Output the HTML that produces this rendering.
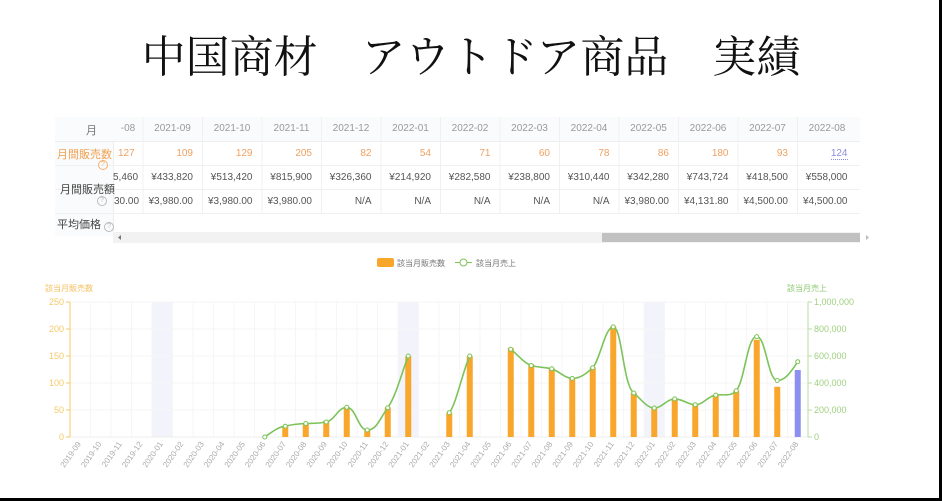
<!DOCTYPE html>
<html><head><meta charset="utf-8"><style>
html,body{margin:0;padding:0;background:#fff;}
body{width:942px;height:501px;position:relative;overflow:hidden;font-family:"Liberation Sans","Noto Sans CJK JP",sans-serif;}
.title{position:absolute;left:0;width:942px;top:30px;text-align:center;font-family:"Liberation Serif","Noto Serif CJK SC",serif;font-size:44px;line-height:56px;color:#111;letter-spacing:0;}
.c{position:absolute;font-size:10px;color:#555;white-space:nowrap;}
.hd{color:#999;text-align:center;width:59px;}
.num{text-align:right;width:50px;}
.q{display:inline-block;width:8px;height:8px;border:1px solid #bbb;border-radius:50%;font-size:7px;line-height:8px;text-align:center;color:#bbb;}
</style></head><body>
<div class="title">中国商材　アウトドア商品　実績</div>

<div style="position:absolute;left:55px;top:117px;width:805px;height:119px;background:#fff;"></div>
<div style="position:absolute;left:55px;top:117px;width:58px;height:119px;background:#fafbfc;border-right:1px solid #eee;"></div>
<div style="position:absolute;left:55px;top:117px;width:805px;height:24px;background:#fafbfc;border-bottom:1px solid #eee;"></div>
<div style="position:absolute;left:55px;top:165px;width:805px;border-top:1px solid #f0f0f0;"></div>
<div style="position:absolute;left:55px;top:189px;width:805px;border-top:1px solid #f0f0f0;"></div>
<div style="position:absolute;left:55px;top:213px;width:805px;border-top:1px solid #f0f0f0;"></div>
<svg style="position:absolute;left:0;top:0" width="942" height="250">
<g stroke="#f0f0f0" stroke-width="1">
<line x1="143" y1="117" x2="143" y2="213"/><line x1="202.5" y1="117" x2="202.5" y2="213"/><line x1="262" y1="117" x2="262" y2="213"/><line x1="321.5" y1="117" x2="321.5" y2="213"/><line x1="381" y1="117" x2="381" y2="213"/><line x1="440.5" y1="117" x2="440.5" y2="213"/><line x1="500" y1="117" x2="500" y2="213"/><line x1="559.5" y1="117" x2="559.5" y2="213"/><line x1="619" y1="117" x2="619" y2="213"/><line x1="678.5" y1="117" x2="678.5" y2="213"/><line x1="738" y1="117" x2="738" y2="213"/><line x1="797.5" y1="117" x2="797.5" y2="213"/>
</g>
<rect x="113" y="232" width="747" height="11" fill="#f2f2f2"/>
<rect x="602" y="233" width="258" height="9" fill="#c1c1c1"/>
<path d="M118 237.5 L121 235 L121 240Z" fill="#777"/>
<path d="M866 235 L869 237.5 L866 240Z" fill="#bbb"/>
</svg>
<div class="c" style="left:86px;top:122px;color:#777;font-size:11px">月</div>
<div class="c" style="left:57px;top:146px;color:#f0a050;font-size:11px">月間販売数</div>
<div class="c" style="left:98px;top:158px"><span class="q" style="border-color:#f5b070;color:#f5b070">?</span></div>
<div class="c" style="left:60px;top:181px;color:#444;font-size:11px">月間販売額</div>
<div class="c" style="left:97px;top:194px"><span class="q">?</span></div>
<div class="c" style="left:57px;top:216px;color:#444;font-size:11px">平均価格 <span class="q">?</span></div>

<div class="c hd" style="left:113px;width:30px;top:123px">-08</div>
<div class="c hd" style="left:143px;top:123px">2021-09</div>
<div class="c hd" style="left:202.5px;top:123px">2021-10</div>
<div class="c hd" style="left:262px;top:123px">2021-11</div>
<div class="c hd" style="left:321.5px;top:123px">2021-12</div>
<div class="c hd" style="left:381px;top:123px">2022-01</div>
<div class="c hd" style="left:440.5px;top:123px">2022-02</div>
<div class="c hd" style="left:500px;top:123px">2022-03</div>
<div class="c hd" style="left:559.5px;top:123px">2022-04</div>
<div class="c hd" style="left:619px;top:123px">2022-05</div>
<div class="c hd" style="left:678.5px;top:123px">2022-06</div>
<div class="c hd" style="left:738px;top:123px">2022-07</div>
<div class="c hd" style="left:797.5px;top:123px">2022-08</div>

<div class="c" style="left:118px;top:148px;color:#f0a060">127</div>
<div class="c num" style="left:143px;top:148px;color:#f0a060">109</div>
<div class="c num" style="left:202.5px;top:148px;color:#f0a060">129</div>
<div class="c num" style="left:262px;top:148px;color:#f0a060">205</div>
<div class="c num" style="left:321.5px;top:148px;color:#f0a060">82</div>
<div class="c num" style="left:381px;top:148px;color:#f0a060">54</div>
<div class="c num" style="left:440.5px;top:148px;color:#f0a060">71</div>
<div class="c num" style="left:500px;top:148px;color:#f0a060">60</div>
<div class="c num" style="left:559.5px;top:148px;color:#f0a060">78</div>
<div class="c num" style="left:619px;top:148px;color:#f0a060">86</div>
<div class="c num" style="left:678.5px;top:148px;color:#f0a060">180</div>
<div class="c num" style="left:738px;top:148px;color:#f0a060">93</div>
<div class="c num" style="left:797.5px;top:148px;color:#8a8de0;"><span style="border-bottom:1px dotted #8a8de0">124</span></div>

<div class="c" style="left:113px;top:172px">5,460</div>
<div class="c num" style="left:143px;top:172px">¥433,820</div>
<div class="c num" style="left:202.5px;top:172px">¥513,420</div>
<div class="c num" style="left:262px;top:172px">¥815,900</div>
<div class="c num" style="left:321.5px;top:172px">¥326,360</div>
<div class="c num" style="left:381px;top:172px">¥214,920</div>
<div class="c num" style="left:440.5px;top:172px">¥282,580</div>
<div class="c num" style="left:500px;top:172px">¥238,800</div>
<div class="c num" style="left:559.5px;top:172px">¥310,440</div>
<div class="c num" style="left:619px;top:172px">¥342,280</div>
<div class="c num" style="left:678.5px;top:172px">¥743,724</div>
<div class="c num" style="left:738px;top:172px">¥418,500</div>
<div class="c num" style="left:797.5px;top:172px">¥558,000</div>

<div class="c" style="left:114px;top:196px">30.00</div>
<div class="c num" style="left:143px;top:196px">¥3,980.00</div>
<div class="c num" style="left:202.5px;top:196px">¥3,980.00</div>
<div class="c num" style="left:262px;top:196px">¥3,980.00</div>
<div class="c num" style="left:321.5px;top:196px">N/A</div>
<div class="c num" style="left:381px;top:196px">N/A</div>
<div class="c num" style="left:440.5px;top:196px">N/A</div>
<div class="c num" style="left:500px;top:196px">N/A</div>
<div class="c num" style="left:559.5px;top:196px">N/A</div>
<div class="c num" style="left:619px;top:196px">¥3,980.00</div>
<div class="c num" style="left:678.5px;top:196px">¥4,131.80</div>
<div class="c num" style="left:738px;top:196px">¥4,500.00</div>
<div class="c num" style="left:797.5px;top:196px">¥4,500.00</div>

<svg style="position:absolute;left:0;top:250px" width="942" height="251" viewBox="0 250 942 251" font-family="Liberation Sans, Noto Sans CJK JP, sans-serif">
<rect x="377" y="258" width="17" height="9" rx="2" fill="#f8a62c"/>
<text x="397" y="266" font-size="8" fill="#777">該当月販売数</text>
<line x1="455" y1="262.5" x2="472" y2="262.5" stroke="#7cc35a" stroke-width="1"/>
<circle cx="463.5" cy="262.5" r="3.5" fill="#fff" stroke="#7cc35a"/>
<text x="476" y="266" font-size="8" fill="#777">該当月売上</text>
<text x="45" y="291" font-size="8" fill="#f5c060">該当月販売数</text>
<text x="787" y="291" font-size="8" fill="#8cc870">該当月売上</text>
<rect x="152" y="302" width="20.5" height="135" fill="#f3f4fb"/>
<rect x="398" y="302" width="20.5" height="135" fill="#f3f4fb"/>
<rect x="644" y="302" width="20.5" height="135" fill="#f3f4fb"/>
<g stroke="#f6f6f6" stroke-width="1">
<line x1="70" y1="302" x2="808" y2="302"/><line x1="70" y1="329" x2="808" y2="329"/><line x1="70" y1="356" x2="808" y2="356"/><line x1="70" y1="383" x2="808" y2="383"/><line x1="70" y1="410" x2="808" y2="410"/>
<path d="M90.5 302V437M111 302V437M131.5 302V437M152 302V437M172.5 302V437M193 302V437M213.5 302V437M234 302V437M254.5 302V437M275 302V437M295.5 302V437M316 302V437M336.5 302V437M357 302V437M377.5 302V437M398 302V437M418.5 302V437M439 302V437M459.5 302V437M480 302V437M500.5 302V437M521 302V437M541.5 302V437M562 302V437M582.5 302V437M603 302V437M623.5 302V437M644 302V437M664.5 302V437M685 302V437M705.5 302V437M726 302V437M746.5 302V437M767 302V437M787.5 302V437"/>
</g>
<line x1="70" y1="437" x2="808" y2="437" stroke="#eee"/>
<line x1="70" y1="302" x2="70" y2="437" stroke="#f5c96a"/>
<line x1="808" y1="302" x2="808" y2="437" stroke="#b8dca0"/>
<g stroke="#f5c96a"><path d="M66 302H70M66 329H70M66 356H70M66 383H70M66 410H70M66 437H70"/></g>
<g stroke="#b8dca0"><path d="M808 302H812M808 329H812M808 356H812M808 383H812M808 410H812M808 437H812"/></g>
<g font-size="9" fill="#f5c96a" text-anchor="end">
<text x="64" y="305">250</text><text x="64" y="332">200</text><text x="64" y="359">150</text><text x="64" y="386">100</text><text x="64" y="413">50</text><text x="64" y="440">0</text>
</g>
<g font-size="9" fill="#9fd080">
<text x="814" y="305">1,000,000</text><text x="814" y="332">800,000</text><text x="814" y="359">600,000</text><text x="814" y="386">400,000</text><text x="814" y="413">200,000</text><text x="814" y="440">0</text>
</g>
<g fill="#f8a62c">
<rect x="282.25" y="426.2" width="6" height="10.8"/>
<rect x="302.75" y="423.5" width="6" height="13.5"/>
<rect x="323.25" y="420.8" width="6" height="16.2"/>
<rect x="343.75" y="407.3" width="6" height="29.7"/>
<rect x="364.25" y="430" width="6" height="7"/>
<rect x="384.75" y="407.3" width="6" height="29.7"/>
<rect x="405.25" y="356" width="6" height="81"/>
<rect x="446.25" y="412.7" width="6" height="24.3"/>
<rect x="466.75" y="356" width="6" height="81"/>
<rect x="507.75" y="347.9" width="6" height="89.1"/>
<rect x="528.25" y="364.1" width="6" height="72.9"/>
<rect x="548.75" y="368.4" width="6" height="68.6"/>
<rect x="569.25" y="378.1" width="6" height="58.9"/>
<rect x="589.75" y="367.3" width="6" height="69.7"/>
<rect x="610.25" y="326.3" width="6" height="110.7"/>
<rect x="630.75" y="392.7" width="6" height="44.3"/>
<rect x="651.25" y="407.8" width="6" height="29.2"/>
<rect x="671.75" y="398.7" width="6" height="38.3"/>
<rect x="692.25" y="404.6" width="6" height="32.4"/>
<rect x="712.75" y="394.9" width="6" height="42.1"/>
<rect x="733.25" y="390.6" width="6" height="46.4"/>
<rect x="753.75" y="339.8" width="6" height="97.2"/>
<rect x="774.25" y="386.8" width="6" height="50.2"/>
</g>
<rect x="794.75" y="370" width="6" height="67" fill="#8c8ff0"/>
<g fill="none" stroke="#7cc35a" stroke-width="1.6" stroke-linejoin="round">
<path d="M264.75 437 C272 432,278 427,285.25 426.2 C292 424.5,298 423.8,305.75 423.5 C313 423.3,319 423.5,326.25 422 C335 420,338 407.3,346.75 407.3 C356 407.3,358 430,367.25 430 C377 430,380 418,387.75 407.8 C396 396,402 372,408.25 356"/>
<path d="M449.25 412.7 C456 405,463 370,469.75 356"/>
<path d="M510.75 349.3 C518 355,524 363,531.25 365.5 C538 367.5,545 367,551.75 368.8 C559 371,565 378.4,572.25 378.4 C580 378.4,586 374,592.75 367.7 C600 360,605 326.9,613.25 326.9 C622 326.9,623 385,633.75 393 C642 400,647 408,654.25 408 C662 408,667 398.9,674.75 398.9 C683 398.9,688 404.8,695.25 404.8 C703 404.8,708 396,715.75 395.1 C724 394,730 397,736.25 390.8 C745 380,747 336.6,756.75 336.6 C766 336.6,768 380.5,777.25 380.5 C786 380.5,792 370,797.75 361.7"/>
</g>
<g fill="#fff" stroke="#7cc35a" stroke-width="1">
<circle cx="264.75" cy="437" r="2"/><circle cx="285.25" cy="426.2" r="2"/><circle cx="305.75" cy="423.5" r="2"/><circle cx="326.25" cy="422" r="2"/><circle cx="346.75" cy="407.3" r="2"/><circle cx="367.25" cy="430" r="2"/><circle cx="387.75" cy="407.8" r="2"/><circle cx="408.25" cy="356" r="2"/><circle cx="449.25" cy="412.7" r="2"/><circle cx="469.75" cy="356" r="2"/><circle cx="510.75" cy="349.3" r="2"/><circle cx="531.25" cy="365.5" r="2"/><circle cx="551.75" cy="368.8" r="2"/><circle cx="572.25" cy="378.4" r="2"/><circle cx="592.75" cy="367.7" r="2"/><circle cx="613.25" cy="326.9" r="2"/><circle cx="633.75" cy="393" r="2"/><circle cx="654.25" cy="408" r="2"/><circle cx="674.75" cy="398.9" r="2"/><circle cx="695.25" cy="404.8" r="2"/><circle cx="715.75" cy="395.1" r="2"/><circle cx="736.25" cy="390.8" r="2"/><circle cx="756.75" cy="336.6" r="2"/><circle cx="777.25" cy="380.5" r="2"/><circle cx="797.75" cy="361.7" r="2"/>
</g>
<g font-size="8" fill="#aaa" text-anchor="end">
<text transform="translate(81.25,444) rotate(-55)">2019-09</text>
<text transform="translate(101.75,444) rotate(-55)">2019-10</text>
<text transform="translate(122.25,444) rotate(-55)">2019-11</text>
<text transform="translate(142.75,444) rotate(-55)">2019-12</text>
<text transform="translate(163.25,444) rotate(-55)">2020-01</text>
<text transform="translate(183.75,444) rotate(-55)">2020-02</text>
<text transform="translate(204.25,444) rotate(-55)">2020-03</text>
<text transform="translate(224.75,444) rotate(-55)">2020-04</text>
<text transform="translate(245.25,444) rotate(-55)">2020-05</text>
<text transform="translate(265.75,444) rotate(-55)">2020-06</text>
<text transform="translate(286.25,444) rotate(-55)">2020-07</text>
<text transform="translate(306.75,444) rotate(-55)">2020-08</text>
<text transform="translate(327.25,444) rotate(-55)">2020-09</text>
<text transform="translate(347.75,444) rotate(-55)">2020-10</text>
<text transform="translate(368.25,444) rotate(-55)">2020-11</text>
<text transform="translate(388.75,444) rotate(-55)">2020-12</text>
<text transform="translate(409.25,444) rotate(-55)">2021-01</text>
<text transform="translate(429.75,444) rotate(-55)">2021-02</text>
<text transform="translate(450.25,444) rotate(-55)">2021-03</text>
<text transform="translate(470.75,444) rotate(-55)">2021-04</text>
<text transform="translate(491.25,444) rotate(-55)">2021-05</text>
<text transform="translate(511.75,444) rotate(-55)">2021-06</text>
<text transform="translate(532.25,444) rotate(-55)">2021-07</text>
<text transform="translate(552.75,444) rotate(-55)">2021-08</text>
<text transform="translate(573.25,444) rotate(-55)">2021-09</text>
<text transform="translate(593.75,444) rotate(-55)">2021-10</text>
<text transform="translate(614.25,444) rotate(-55)">2021-11</text>
<text transform="translate(634.75,444) rotate(-55)">2021-12</text>
<text transform="translate(655.25,444) rotate(-55)">2022-01</text>
<text transform="translate(675.75,444) rotate(-55)">2022-02</text>
<text transform="translate(696.25,444) rotate(-55)">2022-03</text>
<text transform="translate(716.75,444) rotate(-55)">2022-04</text>
<text transform="translate(737.25,444) rotate(-55)">2022-05</text>
<text transform="translate(757.75,444) rotate(-55)">2022-06</text>
<text transform="translate(778.25,444) rotate(-55)">2022-07</text>
<text transform="translate(798.75,444) rotate(-55)">2022-08</text>
</g>
</svg>
<div style="position:absolute;left:939px;top:0;width:3px;height:501px;background:#000"></div>
<div style="position:absolute;left:0;top:498px;width:942px;height:3px;background:#000"></div>
</body></html>
